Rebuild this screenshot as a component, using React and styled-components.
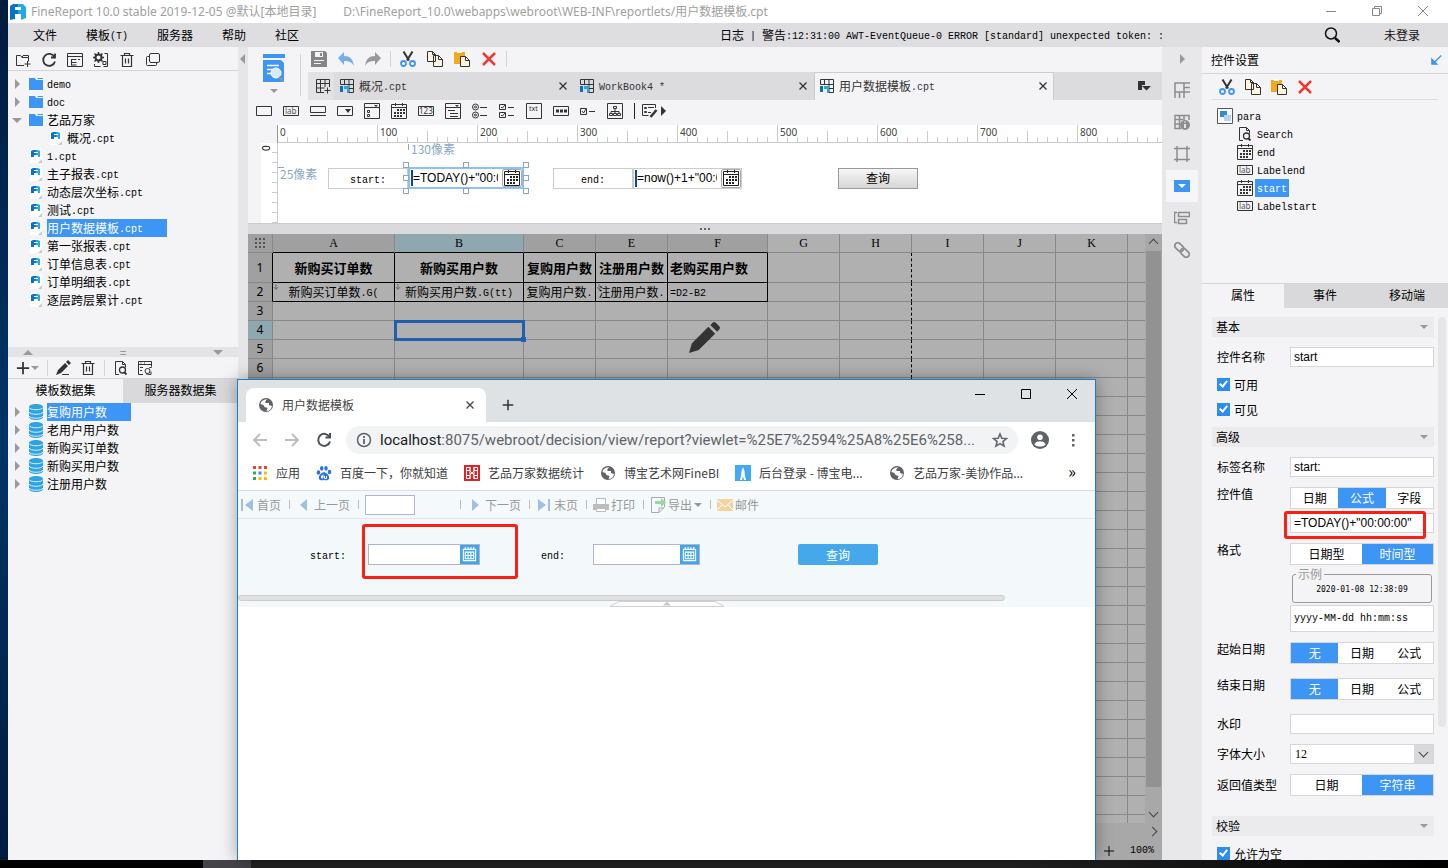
import React, { useState } from "react";
import styled, { createGlobalStyle, css } from "styled-components";

const ICONS = {
  folderAdd: <path d="M9 13.500H1.500V3.500h4l1.500 2h6.500v4M7 5.500L8 3.500h5.500v2M12.500 9v6M9.500 12h6" />,
  refresh: <path strokeWidth="1.800" d="M13.500 5A6 6 0 1 0 14 9.500M14 1.500V5.500H10" />,
  listPanel: <path d="M.5 1.500h15v13H.5zM.5 4.500h15M4.500 7v6.500M4.500 7.500h5M4.500 10.500h5M4.500 13h5M11 7.500h2" />,
  gear: <><circle cx="5.500" cy="5.500" r="3" strokeWidth="2" /><path strokeWidth="1.500" d="M5.500 0v2M5.500 9v2M0 5.500h2M9 5.500h2M1.500 1.500L3 3M8 8l1.500 1.500M9.500 1.500L8 3M1.500 9.500L3 8" /><path d="M1.500 12v2.500h6M11.500 1.500h3v13h-4M10 9.500h3v3h-3z" /></>,
  trash: <path strokeWidth="1.200" d="M1.500 3.500h13M5.500 3.500v-2h5v2M3.500 3.500v11h9v-11M6.500 6.500v5M9.500 6.500v5" />,
  duplicate: <><rect x="4.500" y="1.500" width="10" height="9" rx="1.500" /><path d="M4.500 4.500h-2a1 1 0 0 0-1 1v7a1 1 0 0 0 1 1h8a1 1 0 0 0 1-1v-2" /></>,
  save: <path fill="#858585" stroke="none" fillRule="evenodd" d="M0 0h14l2 2v14H0zM4 1v5h8V1zM9 2h2v3H9zM3 9h10v1H3zM3 12h7v1H3z" />,
  undo: <path fill="#74aff0" stroke="none" d="M6 1v4c6 0 9 3 10 10-2-4-5-5-10-5v4L0 7z" />,
  redo: <path fill="#999" stroke="none" d="M10 1v4C4 5 1 8 0 15c2-4 5-5 10-5v4l6-7z" />,
  cut: <><path strokeWidth="2" d="M3.500 0.500L9 9.500M12.500 0.500L7 9.500" /><circle cx="3.500" cy="12.500" r="2.500" stroke="#3e96ee" strokeWidth="1.800" /><circle cx="12.500" cy="12.500" r="2.500" stroke="#3e96ee" strokeWidth="1.800" /></>,
  copy: <path fill="#fdf5df" d="M.5.5h5l3 3v7h-8zM5.500.5v3h3M6.500 4.500h5l4 4v7h-9zM11.500 4.500v4h4" />,
  paste: <><path fill="#f3a81d" stroke="none" d="M0 1h11v12H0z" /><path fill="#fff" stroke="none" d="M3 0h5v2H3z" /><path fill="#fdf5df" d="M6.500 5.500h5l4 4v6h-9zM11.500 5.500v4h4" /></>,
  remove: <path stroke="#ec3b33" strokeWidth="2.500" d="M2 2l12 12M14 2L2 14" />,
  sheet: <><path d="M1.500 1.500h13v13h-5M1.500 1.500v5h13M5.500 1.500v5M10 1.500v13M10 10.500h4.500" /><path fill="#0870b8" stroke="none" d="M1 8h3v6H1z" /><path fill="#2da3e3" stroke="none" d="M5 8h5v7H8v-4H5z" /></>,
  sheetAdd: <path d="M9 14.500H1.500v-13h13V9M1.500 5.500h13M1.500 10h8M5.500 1.500v13M10 1.500V9M12.500 9.500v6M9.500 12.500h6" />,
  close: <path strokeWidth="1.300" d="M4.500 4.500l7 7M11.500 4.500l-7 7" />,
  button: <path d="M.5 3.500h15v9H.5z" />,
  label: <><path d="M.5 3.500h15v9H.5z" /><text x="2" y="11" fontSize="8" fontFamily="Noto Sans, sans-serif" fill="#555" stroke="none">lab</text></>,
  textbox: <path d="M.5 3.500h15v6H.5zM0 12.500h16" />,
  combo: <><path d="M.5 3.500h15v9H.5z" /><path fill="#333" stroke="none" d="M8 6h6l-3 4z" /></>,
  comboCheck: <><path d="M.5.5h15v15H.5zM.5 4.500h15M3.500 7.500h2v2h-2zM3.500 11.500h2v2h-2z" /><path fill="#333" stroke="none" d="M10 2h4l-2 2z" /></>,
  calendar: <><path d="M.5 1.500h15v14H.5zM.5 4.500h15M4.500 0v3M11.500 0v3" /><path strokeWidth="2" strokeDasharray="2 1" d="M6 7h8M3 10h11M3 13h8" /></>,
  calendarGrid: <path strokeWidth="1.200" d="M1.500 2.500h13v12h-13zM3.500 0v3M6.500 0v3M9.500 0v3M12.500 0v3M3.500 5.500h9v7h-9zM6.500 5.500v7M9.500 5.500v7M3.500 9h9" />,
  number: <><path d="M.5 3.500h15v9H.5z" /><text x="1" y="11" fontSize="8" fontFamily="Noto Sans, sans-serif" fill="#333" stroke="none">123</text></>,
  tree: <><path d="M.5 .5h15v15H.5zM.5 4.500h15M3 7.500h7M5 10.500h8M5 13.500h8" /><path fill="#333" stroke="none" d="M10 2h4l-2 2z" /></>,
  radios: <><circle cx="3.500" cy="4" r="3" /><circle cx="3.500" cy="4" r="1" /><circle cx="3.500" cy="12" r="3" /><circle cx="3.500" cy="12" r="1" /><path d="M8 4.500h7M8 12.500h7" /></>,
  checks: <path d="M.5 1.500h6v5h-6zM2 4l1.500 1L6 2M.5 9.500h6v5h-6zM2 12l1.500 1L6 10M9 4.500h6M9 12.500h6" />,
  txt: <><path d="M.5.5h15v15H.5z" /><text x="3" y="8" fontSize="7" fontFamily="Noto Sans, sans-serif" fill="#333" stroke="none">txt</text></>,
  password: <><path d="M.5 3.500h15v9H.5z" /><path strokeWidth="3" strokeDasharray="3 1" d="M3 8h11" /></>,
  check: <path d="M.5 5.500h6v6h-6zM2 8l1.500 2L6 6M9 8.500h6" />,
  org: <path d="M.5.5h15v15H.5zM6.500 3.500h3v2h-3zM8 6v2M4 10.500v-2h8v2M8 8v2M2.500 10.500h3v2h-3zM6.500 10.500h3v2h-3zM10.500 10.500h3v2h-3z" />,
  form: <><path d="M13.500 5V1.500H.5v11h6M2.500 4.500h2v1h-2zM2.500 8.500h2v1h-2zM6 4.500h6M6 9.500h3" /><path strokeWidth="2.500" d="M14.500 7l-6 7" /></>,
  fineMark: <><path fill="#0a72c6" stroke="none" d="M0 2l3-2h5v3H5v3h3v4H5v5l-5 1z" /><path fill="#23a9e8" stroke="none" d="M8 0h5l3 3v11l-5 2v-6H8V6h3V3H8z" /></>,
  search: <><circle cx="7" cy="6.500" r="5.500" strokeWidth="1.500" /><path strokeWidth="2.500" d="M11 11l4.500 4" /></>,
  minimize: <path d="M3 8.500h10" />,
  restore: <path d="M3.500 5.500h7v7h-7zM5.500 5.500v-2h7v7h-2" />,
  square: <path d="M3.500 3.500h9v9h-9z" />,
  winClose: <path d="M3 3l10 10M13 3L3 13" />,
  plus: <path strokeWidth="2" d="M8 1v14M1 8h14" />,
  plusThin: <path strokeWidth="1.500" d="M8 0v16M0 8h16" />,
  pencil: <path fill="#333" stroke="none" d="M0 15l2-5 7-7 3 3-7 7zM10 2l2-2 3 3-2 2zM6 14h7v1H6z" />,
  pen: <path fill="#333" stroke="none" d="M0 16l1.500-5L10 2.500 13.500 6 5 14.500zM11 1.500L12.300.3q.7-.6 1.400 0l2 2q.6.7 0 1.400L14.500 5z" />,
  docSearch: <><path d="M6 14.500H2.500v-13h7l3 3v3M9.500 1.500v3h3" /><circle cx="9.500" cy="10" r="3" strokeWidth="1.300" /><path strokeWidth="1.800" d="M11.500 12.500l2 2" /></>,
  dataEdit: <><path d="M6 14.500H1.500v-13h13v5M1.500 4.500h13M3 7.500h3M3 10.500h2M3.500 3h1M7 3h1" /><circle cx="10.500" cy="11" r="2.500" /><path d="M12 8l3-1M9 14l5 .5v-3" /></>,
  para: <><path fill="#fff" d="M.5 .5h15v15H.5z" stroke="#555" /><path fill="#2f8fcc" stroke="none" d="M3 3h7v6H3z" /><path fill="#b8d0f2" stroke="none" d="M7 7h7v6H7z" /></>,
  collapse: <path fill="#3e96ee" stroke="#3e96ee" strokeWidth="1.800" d="M15 2L6 11M2.500 7v6.500H9z" />,
  cellAttr: <path strokeWidth="1.500" d="M1 1h9v9H1zM1 10v6M5.500 10v6M10 10v6M10 1h6M10 5.500h6M10 10h6" />,
  cellInfo: <><path strokeWidth="1.500" d="M7 14.500H1v-13h14V6M1 5.500h8M5.500 1v13M10 1v5M1 10h5" /><circle cx="11" cy="11" r="5" fill="#8c8c8c" stroke="none" /><path stroke="#fff" strokeWidth="1.500" d="M11 10v4M11 7.500v1" /></>,
  frame: <path strokeWidth="1.500" d="M3 0v16M13 0v16M0 2.500h16M0 13.500h16" />,
  hyperForm: <path strokeWidth="1.500" d="M3 2.500H.5v10H3M4.500 2.500h11v4h-11zM4.500 9.500h8v4h-8z" />,
  link: <g strokeWidth="1.700" transform="rotate(45 8 8)"><rect x="-1" y="5" width="10" height="6" rx="3" /><rect x="7" y="5" width="10" height="6" rx="3" /></g>,
  back: <path strokeWidth="1.800" d="M15 8H2M8 2L2 8l6 6" />,
  forward: <path strokeWidth="1.800" d="M1 8h13M8 2l6 6-6 6" />,
  reload: <path strokeWidth="2" d="M13.500 5A6 6 0 1 0 14 9.500M14 1V5.500H9.500" />,
  info: <><circle cx="8" cy="8" r="6.500" strokeWidth="1.500" /><path strokeWidth="1.800" d="M8 7v5M8 4v2" /></>,
  star: <path strokeWidth="1.500" d="M8 2l1.800 4.200 4.700.4-3.600 3 1.200 4.600L8 11.700l-4.100 2.500 1.200-4.600-3.600-3 4.700-.4z" />,
  user: <><circle cx="8" cy="8" r="8" fill="#5f6368" stroke="none" /><circle cx="8" cy="5.500" r="2.500" fill="#fff" stroke="none" /><path fill="#fff" stroke="none" d="M3 12c1-4 9-4 10 0-2 2.500-8 2.500-10 0z" /></>,
  dots: <path fill="#5f6368" stroke="none" d="M7 2h2.500v2.500H7zM7 7h2.500v2.500H7zM7 12h2.500v2.500H7z" />,
  globe: <><circle cx="8" cy="8" r="7" fill="#5f6368" stroke="none" /><path fill="#fff" stroke="none" d="M9 2C5 3 3 4 2.500 7l3 1 1 2 3 1-1 3c3 0 5-2 5.500-5l-3-1V6H8L7 5z" /></>,
  apps: <g stroke="none"><path fill="#ea4335" d="M1 1h3v3H1zM6.500 1h3v3h-3zM12 1h3v3h-3z" /><path fill="#34a853" d="M1 6.500h3v3H1zM1 12h3v3H1z" /><path fill="#4285f4" d="M6.500 6.500h3v3h-3z" /><path fill="#fbbc05" d="M12 6.500h3v3h-3zM6.500 12h3v3h-3zM12 12h3v3h-3z" /></g>,
  paw: <g fill="#2c72ee" stroke="none"><ellipse cx="2.500" cy="7.500" rx="1.800" ry="2.300" /><ellipse cx="5.700" cy="3.300" rx="1.700" ry="2.400" /><ellipse cx="10" cy="3.300" rx="1.700" ry="2.400" /><ellipse cx="13.500" cy="7" rx="1.800" ry="2.300" /><path d="M8 7c3 1 6 4 5 7-1 2-4 1-5 1s-4 1-5-1c-1-3 2-6 5-7z" /><path stroke="#fff" fill="none" d="M7 9.500v3.500H5.500v-2H7M8.500 11v2.500h2V11" /></g>,
  redSeal: <><path fill="#d8232a" stroke="none" d="M0 0h16v16H0z" /><path stroke="#fff" d="M2.500 14V2.500H6v3H3M13.500 14V2.500H10v3h3M6 2v12M10 2v12M2.500 13.500H6v-3H3M13.500 13.500H10v-3h3M6 6l4 4M10 6l-4 4" /></>,
  blueTower: <><path fill="#43a9f4" stroke="none" d="M0 0h16v16H0z" /><path fill="#fff" stroke="none" d="M8 2l1.500 4 .5 5 1 4H9l-1-4-1 4H5l1-4 .5-5z" /></>,
  first: <path fill="#a0c0e2" stroke="none" d="M2 2h2v12H2zM14 2v12L6 8z" />,
  prev: <path fill="#a0c0e2" stroke="none" d="M11 2v12L4 8z" />,
  next: <path fill="#a0c0e2" stroke="none" d="M5 2v12l7-6z" />,
  last: <path fill="#a0c0e2" stroke="none" d="M12 2h2v12h-2zM2 2v12l8-6z" />,
  print: <><path fill="#fff" stroke="#bbb" d="M3.500 1.500h9v13h-9z" /><path fill="#bdbdbd" stroke="none" d="M0 7h16v6H0z" /><path fill="#fff" d="M3.500 11.500h9v3h-9z" stroke="#bbb" /></>,
  export: <><path stroke="#aaa" d="M9 15.500H1.500v-15h13V10L9 15.500V11h5" /><path fill="#93d9a5" stroke="none" d="M5 4h6V1l5 4.500-5 4.500V7H5z" /></>,
  mail: <><path fill="#f3d3a0" stroke="none" d="M0 2h16v12H0z" /><path stroke="#fff" d="M0 3l8 7 8-7M0 13l5-5M16 13l-5-5" /></>,
  tabList: <path fill="#333" stroke="none" d="M2 3h7v4H6v5H2zM6 8h9l-4.500 4.500z" />,
  expand: <path stroke="#555" strokeWidth="2" d="M8 0v14M2 8l6 6 6-6" />,
};

const Icon = ({ name, size = 16 }) => (
  <Svg viewBox="0 0 16 16" $size={size} aria-hidden="true">
    {ICONS[name]}
  </Svg>
);

// Latin runs are set in a half-width monospace next to full-width Chinese
const Txt = ({ children }) =>
  String(children)
    .split(/([\x20-\x7e]+)/)
    .filter(Boolean)
    .map((part, i) => (/^[\x20-\x7e]/.test(part) ? <Latin key={i}>{part}</Latin> : part));

const FolderIcon = () => (
  <FileSvg viewBox="0 0 14 14" aria-hidden="true">
    <path fill="#3d95f5" d="M0 1h6l1 2h7v10H0zM8 1h6v1H9z" />
  </FileSvg>
);

const FileIcon = () => (
  <FileSvg viewBox="0 0 14 14" aria-hidden="true">
    <path fill="#fff" d="M1 0h12v10l-4 4H1z" />
    <path fill="#ccc" d="M13 10v4H9z" />
    <path fill="#0a72c6" d="M2 2l2-1h3v2H5v1h2v2H5v2H2z" />
    <path fill="#23a9e8" d="M7 1h2l2 1v6H9V6H7V4h2V3H7z" />
  </FileSvg>
);

const DbIcon = () => (
  <DbSvg viewBox="0 0 14 16" aria-hidden="true">
    <path fill="#2da3e3" d="M0 3c0-4 14-4 14 0v10c0 4-14 4-14 0z" />
    <path fill="none" stroke="#d8effc" d="M0 3.500c1 3 13 3 14 0M0 8c1 3 13 3 14 0M0 12c1 3 13 3 14 0" />
  </DbSvg>
);

const menus = ["文件", "模板(T)", "服务器", "帮助", "社区"];

const files = [
  { name: "demo", type: "folder" },
  { name: "doc", type: "folder" },
  { name: "艺品万家", type: "folder", open: true },
  { name: "概况.cpt", child: true },
  { name: "1.cpt" },
  { name: "主子报表.cpt" },
  { name: "动态层次坐标.cpt" },
  { name: "测试.cpt" },
  { name: "用户数据模板.cpt", selected: true },
  { name: "第一张报表.cpt" },
  { name: "订单信息表.cpt" },
  { name: "订单明细表.cpt" },
  { name: "逐层跨层累计.cpt" },
];

const datasets = ["复购用户数", "老用户用户数", "新购买订单数", "新购买用户数", "注册用户数"];

const widgetIcons = ["button", "label", "textbox", "combo", "comboCheck", "calendar", "number", "tree", "radios", "checks", "txt", "password", "check", "org"];

const widgets = [
  { name: "Search", icon: "docSearch" },
  { name: "end", icon: "calendar" },
  { name: "Labelend", icon: "label" },
  { name: "start", icon: "calendar", selected: true },
  { name: "Labelstart", icon: "label" },
];

const columns = [
  { id: "A", w: 122 },
  { id: "B", w: 129 },
  { id: "C", w: 72 },
  { id: "E", w: 72 },
  { id: "F", w: 100 },
  { id: "G", w: 72 },
  { id: "H", w: 72 },
  { id: "I", w: 72 },
  { id: "J", w: 72 },
  { id: "K", w: 72 },
  { id: "", w: 72 },
];

const cells = {
  1: ["新购买订单数", "新购买用户数", "复购用户数", "注册用户数", "老购买用户数"],
  2: ["新购买订单数.G(", "新购买用户数.G(tt)", "复购用户数.", "注册用户数.", "=D2-B2"],
};

const TitleBar = () => (
  <Title>
    <Icon name="fineMark" />
    <span>FineReport 10.0 stable 2019-12-05 @默认[本地目录]</span>
    <TitlePath>D:\FineReport_10.0\webapps\webroot\WEB-INF\reportlets/用户数据模板.cpt</TitlePath>
    <WindowButtons $gap={30}>
      <IconButton aria-label="最小化"><Icon name="minimize" /></IconButton>
      <IconButton aria-label="还原"><Icon name="restore" /></IconButton>
      <IconButton aria-label="关闭"><Icon name="winClose" /></IconButton>
    </WindowButtons>
  </Title>
);

const MenuBar = () => (
  <Menu>
    <MenuItems>
      {menus.map((m) => (
        <MenuItem key={m}><Txt>{m}</Txt></MenuItem>
      ))}
    </MenuItems>
    <LogLine><Txt>{"日志 | 警告:12:31:00 AWT-EventQueue-0 ERROR [standard] unexpected token: :"}</Txt></LogLine>
    <MenuRight>
      <IconButton aria-label="搜索"><Icon name="search" /></IconButton>
      <MenuItem>未登录</MenuItem>
    </MenuRight>
  </Menu>
);

const LeftPanel = () => (
  <Left>
    <LeftTools>
      {["folderAdd", "refresh", "listPanel", "gear", "trash", "duplicate"].map((n) => (
        <IconButton key={n} aria-label={n}><Icon name={n} /></IconButton>
      ))}
    </LeftTools>
    <FileTree>
      {files.map((f) => (
        <TreeRow key={f.name} $child={f.child}>
          <Twisty>{f.type && <Caret $dir={f.open ? "down" : "right"} />}</Twisty>
          {f.type ? <FolderIcon /> : <FileIcon />}
          <TreeLabel $selected={f.selected}><Txt>{f.name}</Txt></TreeLabel>
        </TreeRow>
      ))}
    </FileTree>
    <PanelSplit>
      <Caret $dir="up" />
      <span>=</span>
      <Caret $dir="down" />
    </PanelSplit>
    <DataTools>
      <IconButton aria-label="添加"><Icon name="plus" size={14} /></IconButton>
      <Caret $dir="down" $small />
      <Divider />
      <IconButton aria-label="编辑"><Icon name="pencil" /></IconButton>
      <IconButton aria-label="删除"><Icon name="trash" /></IconButton>
      <Divider />
      <IconButton aria-label="预览"><Icon name="docSearch" /></IconButton>
      <IconButton aria-label="连接"><Icon name="dataEdit" /></IconButton>
    </DataTools>
    <Tabs>
      <PanelTab $active>模板数据集</PanelTab>
      <PanelTab>服务器数据集</PanelTab>
    </Tabs>
    <div>
      {datasets.map((d, i) => (
        <TreeRow key={d}>
          <Twisty><Caret $dir="right" /></Twisty>
          <DbIcon />
          <TreeLabel $selected={i === 0}>{d}</TreeLabel>
        </TreeRow>
      ))}
    </div>
  </Left>
);

const TemplateTab = ({ name, active }) => (
  <DocTab $active={active}>
    <Icon name="sheet" />
    <DocName><Txt>{name}</Txt></DocName>
    <IconButton aria-label="关闭标签"><Icon name="close" /></IconButton>
  </DocTab>
);

const DesignToolbar = () => (
  <DesignTop>
    <Preview aria-label="预览">
      <PreviewSvg viewBox="0 0 22 29" aria-hidden="true">
        <path fill="#3d95f5" d="M0 0h22v4H0zM0 6h18l3 3v19H0z" />
        <path stroke="#fff" strokeWidth="1.500" d="M4 11.500h12M4 15.500h8M4 19.500h6" />
        <circle cx="13" cy="19" r="5" fill="#d8ebfd" stroke="#fff" />
        <path stroke="#8a97a5" strokeWidth="2" d="M16 23l4 4" />
      </PreviewSvg>
      <Caret $dir="down" $small />
    </Preview>
    <DesignRows>
      <EditTools>
        <IconButton aria-label="保存"><Icon name="save" /></IconButton>
        <IconButton aria-label="撤销"><Icon name="undo" /></IconButton>
        <IconButton aria-label="重做"><Icon name="redo" /></IconButton>
        <Divider />
        <IconButton aria-label="剪切"><Icon name="cut" /></IconButton>
        <IconButton aria-label="复制"><Icon name="copy" /></IconButton>
        <IconButton aria-label="粘贴"><Icon name="paste" /></IconButton>
        <IconButton aria-label="删除"><Icon name="remove" /></IconButton>
        <Divider />
      </EditTools>
      <DocTabs>
        <NewTab aria-label="新建"><Icon name="sheetAdd" /></NewTab>
        <TemplateTab name="概况.cpt" />
        <TemplateTab name="WorkBook4 *" />
        <TemplateTab name="用户数据模板.cpt" active />
        <TabListButton aria-label="标签列表"><Icon name="tabList" /></TabListButton>
      </DocTabs>
    </DesignRows>
  </DesignTop>
);

const ParamDesigner = () => (
  <>
    <RulerX>
      {[0, 100, 200, 300, 400, 500, 600, 700, 800].map((n) => (
        <RulerMark key={n}>{n}</RulerMark>
      ))}
    </RulerX>
    <CanvasRow>
      <RulerY><span>0</span></RulerY>
      <Canvas>
        <OffsetTop>130像素</OffsetTop>
        <CanvasWidgets>
          <OffsetLeft>25像素</OffsetLeft>
          <LabelWidget><Txt>start:</Txt></LabelWidget>
          <DateWidget $selected>
            <DateText>=TODAY()+"00:00:00"</DateText>
            <DateIcon><Icon name="calendar" /></DateIcon>
            <HandleFrame>
              {["0 0", "50% 0", "100% 0", "0 50%", "100% 50%", "0 100%", "50% 100%", "100% 100%"].map((p) => (
                <Handle key={p} $at={p.split(" ")} />
              ))}
            </HandleFrame>
          </DateWidget>
          <LabelWidget $after={29}><Txt>end:</Txt></LabelWidget>
          <DateWidget $narrow>
            <DateText>=now()+1+"00:00:00"</DateText>
            <DateIcon><Icon name="calendar" /></DateIcon>
          </DateWidget>
          <QueryWidget>查询</QueryWidget>
        </CanvasWidgets>
      </Canvas>
    </CanvasRow>
    <CanvasSplit>
      <svg viewBox="0 0 10 2" aria-hidden="true">
        <path fill="#666" d="M0 0h2v2H0zM4 0h2v2H4zM8 0h2v2H8z" />
      </svg>
    </CanvasSplit>
  </>
);

const Sheet = () => (
  <SheetArea>
    <SheetMain>
      <SheetView>
        <Grid>
          <colgroup>
            <Col $w={25} />
            {columns.map((c, i) => <Col key={i} $w={c.w} />)}
          </colgroup>
          <thead>
            <tr>
              <Corner>
                <CornerSvg viewBox="0 0 11 11" aria-hidden="true">
                  <path fill="none" stroke="#555" strokeWidth="2" strokeDasharray="2 2" d="M0 1h11M0 5h11M0 9h11" />
                </CornerSvg>
              </Corner>
              {columns.map((c, i) => (
                <ColHead key={i} $used={i < 5} $current={c.id === "B"}>{c.id}</ColHead>
              ))}
            </tr>
          </thead>
          <tbody>
            {Array.from({ length: 31 }, (_, r) => r + 1).map((r) => (
              <tr key={r}>
                <RowHead $tall={r === 1} $used={r < 3} $current={r === 4}>{r}</RowHead>
                {columns.map((c, i) => (
                  <Cell key={i} $used={r < 3 && i < 5} $bold={r === 1} $left={i === 4 && r < 3} $page={c.id === "H"} $current={r === 4 && c.id === "B"}>
                    {cells[r] && cells[r][i] ? <Txt>{cells[r][i]}</Txt> : null}
                    {r === 2 && i < 4 && i !== 2 && <ExpandMark><Icon name="expand" size={6} /></ExpandMark>}
                  </Cell>
                ))}
              </tr>
            ))}
          </tbody>
        </Grid>
        <EditCursor><Icon name="pen" size={31} /></EditCursor>
      </SheetView>
      <ScrollY>
        <Chevron $dir="up" />
        <ScrollThumb />
        <Chevron $dir="down" />
      </ScrollY>
    </SheetMain>
    <SheetFoot>
      <ScrollX><Chevron $dir="right" /></ScrollX>
      <Zoom>
        <Icon name="plusThin" size={10} />
        <Txt>100%</Txt>
      </Zoom>
    </SheetFoot>
  </SheetArea>
);

const SegmentField = ({ items, value }) => {
  const [current, setCurrent] = useState(value);
  return (
    <Segments>
      {items.map((s) => (
        <Segment key={s} type="button" $active={s === current} onClick={() => setCurrent(s)}>{s}</Segment>
      ))}
    </Segments>
  );
};

const CheckField = ({ id, label }) => (
  <CheckRow htmlFor={id}>
    <CheckBox id={id} type="checkbox" defaultChecked />
    {label}
  </CheckRow>
);

const Section = ({ title, gap }) => (
  <SectionBar $gap={gap}>
    {title}
    <Caret $dir="down" $small />
  </SectionBar>
);

const Properties = () => (
  <PropScroll>
    <PropForm>
      <Section title="基本" />
      <Row>
        <RowLabel htmlFor="w-name">控件名称</RowLabel>
        <Field id="w-name" defaultValue="start" />
      </Row>
      <CheckGroup>
        <CheckField id="w-enabled" label="可用" />
        <CheckField id="w-visible" label="可见" />
      </CheckGroup>
      <Section title="高级" gap={5} />
      <Row>
        <RowLabel htmlFor="w-label">标签名称</RowLabel>
        <Field id="w-label" defaultValue="start:" />
      </Row>
      <Row $top>
        <RowLabel htmlFor="w-value">控件值</RowLabel>
        <Stack $gap={4}>
          <SegmentField items={["日期", "公式", "字段"]} value="公式" />
          <Marked>
            <Field id="w-value" defaultValue={'=TODAY()+"00:00:00"'} />
            <FormulaMark />
          </Marked>
        </Stack>
      </Row>
      <Row $top>
        <RowLabel as="span">格式</RowLabel>
        <Stack $gap={2}>
          <SegmentField items={["日期型", "时间型"]} value="时间型" />
          <Sample>
            <legend>示例</legend>
            2020-01-08 12:38:09
          </Sample>
          <Field $mono aria-label="格式" defaultValue="yyyy-MM-dd hh:mm:ss" />
        </Stack>
      </Row>
      <Row $top>
        <RowLabel as="span">起始日期</RowLabel>
        <SegmentField items={["无", "日期", "公式"]} value="无" />
      </Row>
      <Row $top $gap={14}>
        <RowLabel as="span">结束日期</RowLabel>
        <SegmentField items={["无", "日期", "公式"]} value="无" />
      </Row>
      <Row $gap={14}>
        <RowLabel htmlFor="w-mark">水印</RowLabel>
        <Field id="w-mark" />
      </Row>
      <Row>
        <RowLabel htmlFor="w-size">字体大小</RowLabel>
        <SelectWrap>
          <SizeSelect id="w-size" defaultValue="12">
            <option>12</option>
            <option>14</option>
          </SizeSelect>
          <SelectArrow><Chevron $dir="down" /></SelectArrow>
        </SelectWrap>
      </Row>
      <Row>
        <RowLabel as="span">返回值类型</RowLabel>
        <SegmentField items={["日期", "字符串"]} value="字符串" />
      </Row>
      <Section title="校验" gap={20} />
      <CheckGroup>
        <CheckField id="w-empty" label="允许为空" />
      </CheckGroup>
    </PropForm>
    <PropBar />
  </PropScroll>
);

const RightPanel = () => (
  <Right>
    <RightHead>
      控件设置
      <IconButton aria-label="收起"><Icon name="collapse" size={12} /></IconButton>
    </RightHead>
    <RightTools>
      {["cut", "copy", "paste", "remove"].map((n) => (
        <IconButton key={n} aria-label={n}><Icon name={n} /></IconButton>
      ))}
    </RightTools>
    <WidgetTree>
      <WidgetRow>
        <Icon name="para" />
        <WidgetName><Txt>para</Txt></WidgetName>
      </WidgetRow>
      {widgets.map((w) => (
        <WidgetRow key={w.name} $child>
          <Icon name={w.icon} />
          <WidgetName $selected={w.selected}><Txt>{w.name}</Txt></WidgetName>
        </WidgetRow>
      ))}
    </WidgetTree>
    <Tabs>
      <PanelTab $active>属性</PanelTab>
      <PanelTab>事件</PanelTab>
      <PanelTab>移动端</PanelTab>
    </Tabs>
    <Properties />
  </Right>
);

const Browser = () => (
  <BrowserWindow>
    <TabStrip>
      <BrowserTab>
        <Icon name="globe" />
        <span>用户数据模板</span>
        <IconButton aria-label="关闭标签页"><Icon name="close" /></IconButton>
      </BrowserTab>
      <NewBrowserTab aria-label="新标签页"><Icon name="plus" size={12} /></NewBrowserTab>
      <WindowButtons $gap={30} $dark>
        <IconButton aria-label="最小化窗口"><Icon name="minimize" /></IconButton>
        <IconButton aria-label="最大化窗口"><Icon name="square" /></IconButton>
        <IconButton aria-label="关闭窗口"><Icon name="winClose" /></IconButton>
      </WindowButtons>
    </TabStrip>
    <AddressRow>
      <NavButton aria-label="后退"><Icon name="back" /></NavButton>
      <NavButton aria-label="前进"><Icon name="forward" /></NavButton>
      <NavButton aria-label="刷新" $on><Icon name="reload" /></NavButton>
      <Address>
        <Icon name="info" />
        <Url><b>localhost</b>:8075/webroot/decision/view/report?viewlet=%25E7%2594%25A8%25E6%258...</Url>
        <Icon name="star" />
      </Address>
      <NavButton aria-label="账户" $on><Icon name="user" size={18} /></NavButton>
      <NavButton aria-label="更多" $on><Icon name="dots" /></NavButton>
    </AddressRow>
    <Bookmarks>
      <Bookmark href="#apps" $w={64}><Icon name="apps" />应用</Bookmark>
      <Bookmark href="#baidu" $w={148}><Icon name="paw" />百度一下，你就知道</Bookmark>
      <Bookmark href="#stats" $w={136}><Icon name="redSeal" />艺品万家数据统计</Bookmark>
      <Bookmark href="#bi" $w={135}><Icon name="globe" />博宝艺术网FineBI</Bookmark>
      <Bookmark href="#login" $w={154}><Icon name="blueTower" />后台登录 - 博宝电...</Bookmark>
      <Bookmark href="#works" $w={150}><Icon name="globe" />艺品万家-美协作品...</Bookmark>
      <MoreMarks aria-label="更多书签">»</MoreMarks>
    </Bookmarks>
    <ReportBar>
      <ReportButton><Icon name="first" />首页</ReportButton>
      <Bar />
      <ReportButton><Icon name="prev" />上一页</ReportButton>
      <Bar />
      <PageInput aria-label="页码" />
      <Bar />
      <ReportButton><Icon name="next" />下一页</ReportButton>
      <Bar />
      <ReportButton><Icon name="last" />末页</ReportButton>
      <Bar />
      <ReportButton><Icon name="print" />打印</ReportButton>
      <Bar />
      <ReportButton><Icon name="export" />导出<Caret $dir="down" $small /></ReportButton>
      <Bar />
      <ReportButton><Icon name="mail" />邮件</ReportButton>
    </ReportBar>
    <ParamPane>
      <ParamRow>
        <ParamLabel htmlFor="p-start"><Txt>start:</Txt></ParamLabel>
        <DateInput>
          <input id="p-start" />
          <DateButton aria-label="选择开始日期"><Icon name="calendarGrid" size={15} /></DateButton>
          <StartMark />
        </DateInput>
        <ParamLabel htmlFor="p-end" $before={61}><Txt>end:</Txt></ParamLabel>
        <DateInput $narrow>
          <input id="p-end" />
          <DateButton aria-label="选择结束日期"><Icon name="calendarGrid" size={15} /></DateButton>
        </DateInput>
        <Query>查询</Query>
      </ParamRow>
      <PaneScroll />
      <PaneFold>
        <svg viewBox="0 0 114 6" aria-hidden="true">
          <path fill="#fff" stroke="#d0d0d0" d="M0 5.500L9 .5h96l9 5z" />
          <path fill="#c8c8c8" d="M53 4.500l4-4 4 4z" />
        </svg>
      </PaneFold>
    </ParamPane>
  </BrowserWindow>
);

export default function App() {
  return (
    <Desktop>
      <GlobalStyle />
      <Designer>
        <TitleBar />
        <MenuBar />
        <Body>
          <LeftPanel />
          <Gutter><Caret $dir="left" /></Gutter>
          <Center>
            <DesignToolbar />
            <WidgetBar>
              {widgetIcons.map((n) => (
                <IconButton key={n} aria-label={n}><Icon name={n} /></IconButton>
              ))}
              <Divider $dark />
              <FormButton aria-label="预定义控件"><Icon name="form" /><Caret $dir="right" $dark /></FormButton>
            </WidgetBar>
            <ParamDesigner />
            <Sheet />
          </Center>
          <Rail>
            <Caret $dir="right" />
            {["cellAttr", "cellInfo", "frame", "widget", "hyperForm", "link"].map((n) => (
              <RailButton key={n} aria-label={n} $active={n === "widget"}>
                {n === "widget" ? <WidgetChip><Caret $dir="down" $light $small /></WidgetChip> : <Icon name={n} />}
              </RailButton>
            ))}
          </Rail>
          <RightPanel />
        </Body>
      </Designer>
      <Browser />
      <Taskbar><TaskActive /></Taskbar>
    </Desktop>
  );
}

const GlobalStyle = createGlobalStyle`
  *, *::before, *::after {
    box-sizing: border-box;
  }
  body {
    margin: 0;
    overflow: hidden;
    font: 12px/18px "Noto Sans CJK SC", sans-serif;
    color: #000;
  }
  button, input, select {
    font: inherit;
    color: inherit;
    border: 0;
    padding: 0;
    margin: 0;
    background: none;
    border-radius: 0;
  }
`;

const Svg = styled.svg`
  flex: none;
  display: block;
  width: ${(p) => p.$size}px;
  height: ${(p) => p.$size}px;
  fill: none;
  stroke: currentColor;
`;

const Latin = styled.span`
  font-family: "Liberation Mono", monospace;
  font-size: 10px;
  line-height: 10px;
  vertical-align: 1px;
  white-space: pre;
`;

const FileSvg = styled.svg`
  flex: none;
  width: 14px;
  height: 14px;
`;

const DbSvg = styled.svg`
  flex: none;
  width: 14px;
  height: 16px;
`;

const caretBorders = {
  up: "0 5px 5px 5px",
  down: "5px 5px 0 5px",
  right: "5px 0 5px 5px",
  left: "5px 5px 5px 0",
};

const caretSides = { up: "bottom", down: "top", right: "left", left: "right" };

const Caret = styled.i`
  flex: none;
  width: 0;
  height: 0;
  border: solid transparent;
  border-width: ${(p) => caretBorders[p.$dir]};
  border-${(p) => caretSides[p.$dir]}-color: ${(p) => (p.$light ? "#fff" : p.$dark ? "#333" : "#999")};
  ${(p) => p.$small && "border-width: 4px 4px 0 4px;"}
`;

const turns = { up: "-135deg", right: "-45deg", down: "45deg" };

const Chevron = styled.i`
  flex: none;
  width: 7px;
  height: 7px;
  border: solid #444;
  border-width: 0 1px 1px 0;
  transform: rotate(${(p) => turns[p.$dir]});
`;

const IconButton = styled.button`
  display: flex;
  align-items: center;
  justify-content: center;
  flex: none;
`;

const Divider = styled.i`
  flex: none;
  width: 1px;
  height: 16px;
  background: ${(p) => (p.$dark ? "#222" : "#d4d4d6")};
`;

const Desktop = styled.div`
  position: relative;
  display: flex;
  flex-direction: column;
  height: 100vh;
  background: linear-gradient(#001b3d, #003468 50%, #001b3d);
`;

const Designer = styled.div`
  flex: 1;
  min-height: 0;
  display: flex;
  flex-direction: column;
  margin-left: 8px;
  background: #f4f4f6;
`;

const Title = styled.header`
  display: flex;
  align-items: center;
  height: 23px;
  padding: 0 17px 0 2px;
  gap: 5px;
  background: #fff;
  color: #a0a0a0;
  font-family: "Noto Sans", "Noto Sans CJK SC", sans-serif;
  white-space: nowrap;
`;

const TitlePath = styled.span`
  margin-left: 22px;
`;

const WindowButtons = styled.div`
  display: flex;
  gap: ${(p) => p.$gap}px;
  margin-left: auto;
  padding-bottom: 2px;
  color: ${(p) => (p.$dark ? "#000" : "#888")};
`;

const Menu = styled.nav`
  display: flex;
  align-items: center;
  height: 24px;
  padding-bottom: 1px;
  background: #dedee0;
`;

const MenuItems = styled.div`
  flex: 1;
  display: flex;
  gap: 29px;
  padding-left: 25px;
`;

const MenuItem = styled.button`
  white-space: nowrap;
`;

const LogLine = styled.div`
  width: 442px;
  overflow: hidden;
  white-space: nowrap;
`;

const MenuRight = styled.div`
  display: flex;
  align-items: center;
  justify-content: flex-end;
  gap: 44px;
  width: 286px;
  padding-right: 28px;
  color: #111;
`;

const Body = styled.div`
  flex: 1;
  min-height: 0;
  display: flex;
`;

const Left = styled.aside`
  flex: none;
  width: 230px;
  display: flex;
  flex-direction: column;
`;

const LeftTools = styled.div`
  display: flex;
  align-items: center;
  gap: 10px;
  height: 24px;
  padding: 2px 7px 0;
  border-bottom: 1px solid #d4d4d6;
  color: #333;
`;

const FileTree = styled.div`
  height: 276px;
  padding-top: 4px;
`;

const TreeRow = styled.div`
  display: flex;
  align-items: center;
  height: 18px;
  gap: 4px;
  padding-left: ${(p) => (p.$child ? 24 : 4)}px;
  white-space: nowrap;
`;

const Twisty = styled.span`
  display: flex;
  justify-content: center;
  width: 13px;
  padding-right: 3px;
`;

const TreeLabel = styled.span`
  ${(p) =>
    p.$selected &&
    css`
      padding-right: 24px;
      background: #3d95f5;
      color: #fff;
    `}
`;

const PanelSplit = styled.div`
  display: flex;
  align-items: center;
  justify-content: space-between;
  height: 10px;
  padding: 0 15px;
  background: #e4e4e6;
  color: #888;
  line-height: 10px;
`;

const DataTools = styled.div`
  display: flex;
  align-items: center;
  gap: 8px;
  height: 21px;
  padding: 0 8px;
  color: #333;
  & > i:nth-child(2) {
    margin-left: -7px;
  }
`;

const Tabs = styled.div`
  display: flex;
  height: 25px;
`;

const PanelTab = styled.button`
  flex: 1;
  padding-bottom: 2px;
  background: ${(p) => (p.$active ? "transparent" : "#d9d9db")};
  border-top: 1px solid #d4d4d6;
`;

const Gutter = styled.div`
  flex: none;
  width: 10px;
  padding: 7px 0 0 2px;
  display: flex;
  background: #e6e6e8;
`;

const Center = styled.main`
  flex: 1;
  min-width: 0;
  display: flex;
  flex-direction: column;
`;

const DesignTop = styled.div`
  display: flex;
  height: 53px;
`;

const Preview = styled.button`
  flex: none;
  width: 53px;
  height: 42px;
  margin: 7px 7px 0 0;
  display: flex;
  flex-direction: column;
  align-items: center;
  gap: 6px;
  border-right: 1px solid #d4d4d6;
`;

const PreviewSvg = styled.svg`
  width: 22px;
  height: 29px;
  fill: none;
`;

const DesignRows = styled.div`
  flex: 1;
  min-width: 0;
`;

const EditTools = styled.div`
  display: flex;
  align-items: center;
  gap: 11px;
  height: 25px;
  padding: 0 3px 1px;
  color: #333;
  & > i {
    margin: 0 -2px;
  }
`;

const DocTabs = styled.div`
  display: flex;
  height: 28px;
  background: #dcdcde;
  color: #333;
`;

const NewTab = styled.button`
  flex: none;
  width: 26px;
  display: flex;
  align-items: center;
  justify-content: flex-end;
  padding-right: 3px;
  background: #e2e2e4;
`;

const DocTab = styled.div`
  flex: 0 1 240px;
  display: flex;
  align-items: center;
  gap: 4px;
  padding: 0 2px 2px 4px;
  white-space: nowrap;
  background: ${(p) => (p.$active ? "#f4f4f6" : "transparent")};
  border: solid ${(p) => (p.$active ? "#cdcdcf" : "transparent")};
  border-width: 1px 1px 0;
`;

const DocName = styled.span`
  flex: 1;
`;

const TabListButton = styled(IconButton)`
  margin-left: auto;
  padding-right: 10px;
`;

const WidgetBar = styled.div`
  display: flex;
  align-items: center;
  gap: 11px;
  height: 25px;
  padding: 0 8px 3px;
  color: #333;
`;

const FormButton = styled(IconButton)`
  gap: 3px;
  margin-left: -4px;
`;

const RulerX = styled.div`
  display: flex;
  height: 18px;
  margin-left: 29px;
  overflow: hidden;
  border-left: 1px solid #999;
  border-bottom: 1px solid #c8c8ca;
  background: #fff;
`;

const RulerMark = styled.span`
  flex: none;
  width: 100px;
  padding-left: 2px;
  border-right: 1px solid #ccc;
  background:
    linear-gradient(#ccc, #ccc) 49px 100% / 1px 11px no-repeat,
    repeating-linear-gradient(90deg, transparent 0 9px, #ccc 9px 10px) 0 100% / 100px 5px no-repeat;
  font: 10px/14px "Noto Sans", sans-serif;
  color: #444;
`;

const CanvasRow = styled.div`
  display: flex;
  height: 80px;
  padding-left: 13px;
`;

const RulerY = styled.div`
  flex: none;
  width: 17px;
  padding-left: 1px;
  border-right: 1px solid #ccc;
  background: repeating-linear-gradient(transparent 0 9px, #ccc 9px 10px) 100% 0 / 5px 100% no-repeat #fff;
  font: 10px/8px "Noto Sans", sans-serif;
  & > span {
    display: block;
    width: 8px;
    transform: rotate(-90deg);
  }
`;

const Canvas = styled.div`
  flex: 1;
  min-width: 0;
  background: #fff;
`;

const OffsetTop = styled.div`
  width: 60px;
  height: 16px;
  margin-left: 130px;
  padding-left: 3px;
  line-height: 12px;
  color: #8aa8c4;
  background: linear-gradient(#8aa8c4, #8aa8c4) 0 1px / 1px 6px no-repeat;
`;

const CanvasWidgets = styled.div`
  display: flex;
  align-items: center;
  padding-top: 8px;
  height: 22px;
  box-sizing: content-box;
`;

const OffsetLeft = styled.span`
  flex: none;
  align-self: flex-start;
  width: 50px;
  padding-left: 2px;
  line-height: 14px;
  color: #8aa8c4;
  background: linear-gradient(#8aa8c4, #8aa8c4) 0 0 / 6px 1px no-repeat;
`;

const LabelWidget = styled.span`
  flex: none;
  width: 80px;
  height: 21px;
  margin-left: ${(p) => p.$after || 0}px;
  line-height: 20px;
  text-align: center;
  border: 1px solid #ccc;
`;

const DateWidget = styled.div`
  position: relative;
  flex: none;
  display: flex;
  width: ${(p) => (p.$narrow ? 109 : 116)}px;
  height: ${(p) => (p.$selected ? 22 : 21)}px;
  border: ${(p) => (p.$selected ? "2px solid #8ec0f4" : "1px solid #ccc")};
`;

const DateText = styled.span`
  flex: 1;
  min-width: 0;
  overflow: hidden;
  margin: 1px 4px 1px 1px;
  border-left: 2px solid #0b4a8a;
  font: 12px/16px "Liberation Sans", Arial, sans-serif;
  white-space: nowrap;
`;

const DateIcon = styled.span`
  display: flex;
  align-items: center;
  justify-content: center;
  flex: none;
  width: 20px;
  border: 1px solid #aaa;
  border-radius: 2px;
  color: #222;
`;

const HandleFrame = styled.div`
  position: absolute;
  inset: -4px;
`;

const Handle = styled.i`
  position: absolute;
  left: ${(p) => p.$at[0]};
  top: ${(p) => p.$at[1]};
  width: 6px;
  height: 6px;
  margin: -3px;
  border: 1px solid #8aa8c4;
  background: #fff;
`;

const QueryWidget = styled.span`
  flex: none;
  width: 80px;
  height: 21px;
  margin-left: 96px;
  text-align: center;
  border: 1px solid #999;
  background: linear-gradient(#f6f6f6, #d6d6d6);
`;

const CanvasSplit = styled.div`
  display: flex;
  align-items: center;
  justify-content: center;
  height: 11px;
  border-top: 1px solid #ccc;
  background: #dadadc;
  & > svg {
    width: 10px;
    height: 2px;
  }
`;

const SheetArea = styled.div`
  flex: 1;
  min-height: 0;
  display: flex;
  flex-direction: column;
  background: #b0b0b0;
`;

const SheetMain = styled.div`
  flex: 1;
  min-height: 0;
  display: flex;
`;

const SheetView = styled.div`
  position: relative;
  flex: 1;
  min-width: 0;
  overflow: hidden;
`;

const Grid = styled.table`
  width: 922px;
  table-layout: fixed;
  border-collapse: separate;
  border-spacing: 0;
`;

const Col = styled.col`
  width: ${(p) => p.$w}px;
`;

const ColHead = styled.th`
  height: 19px;
  padding: 0;
  border: solid #888;
  border-width: 0 1px 1px 0;
  border-bottom-color: ${(p) => (p.$used ? "#000" : "#888")};
  background: ${(p) => (p.$current ? "#8fa7ae" : p.$used ? "#a0a0a0" : "#b0b0b0")};
  font: 12px/16px "Liberation Serif", serif;
`;

const Corner = styled(ColHead)`
  background: #a0a0a0;
`;

const CornerSvg = styled.svg`
  display: block;
  width: 11px;
  height: 11px;
  margin: 0 auto;
`;

const RowHead = styled(ColHead)`
  height: ${(p) => (p.$tall ? 30 : 19)}px;
  border-bottom-color: #888;
  border-right-color: ${(p) => (p.$used ? "#000" : "#888")};
  background: ${(p) => (p.$current ? "#8fa7ae" : "#a0a0a0")};
  font: 12px/16px "Noto Sans", sans-serif;
`;

const Cell = styled.td`
  position: relative;
  height: 19px;
  padding: 0 0 0 ${(p) => (p.$left ? 2 : 0)}px;
  overflow: hidden;
  white-space: nowrap;
  line-height: 16px;
  text-align: ${(p) => (p.$left ? "left" : "center")};
  font-weight: ${(p) => (p.$bold ? 700 : 400)};
  font-size: ${(p) => (p.$bold ? 13 : 12)}px;
  border: solid ${(p) => (p.$used ? "#000" : "#888")};
  border-width: 0 1px 1px 0;
  ${(p) => p.$page && "border-right: 1px dashed #000;"}
  ${(p) =>
    p.$current &&
    css`
      overflow: visible;
      outline: 3px solid #1f5fae;
      outline-offset: -2px;
      z-index: 1;
      &::after {
        content: "";
        position: absolute;
        right: -3px;
        bottom: -3px;
        width: 5px;
        height: 5px;
        background: #1f5fae;
      }
    `}
`;

const ExpandMark = styled.i`
  position: absolute;
  left: 0;
  top: 1px;
`;

const EditCursor = styled.span`
  position: absolute;
  left: 441px;
  top: 88px;
`;

const ScrollY = styled.div`
  flex: none;
  width: 17px;
  display: flex;
  flex-direction: column;
  align-items: center;
  padding: 6px 0 7px;
  gap: 4px;
  background: #a8a8a8;
`;

const ScrollThumb = styled.div`
  width: 15px;
  flex: 0 1 536px;
  margin-bottom: auto;
  background: #929292;
`;

const SheetFoot = styled.div`
  height: 37px;
  background: #a8a8a8;
`;

const ScrollX = styled.div`
  display: flex;
  align-items: center;
  justify-content: flex-end;
  height: 17px;
  padding-right: 6px;
`;

const Zoom = styled.div`
  display: flex;
  align-items: center;
  justify-content: flex-end;
  gap: 16px;
  padding: 2px 8px 0 0;
  height: 20px;
`;

const Rail = styled.div`
  flex: none;
  width: 40px;
  display: flex;
  flex-direction: column;
  align-items: center;
  padding-top: 7px;
  background: #e8e8ea;
  color: #8c8c8c;
  & > i {
    margin-bottom: 10px;
  }
`;

const RailButton = styled(IconButton)`
  width: 32px;
  height: 32px;
  background: ${(p) => (p.$active ? "#f6f6f8" : "transparent")};
`;

const WidgetChip = styled.span`
  display: flex;
  align-items: center;
  justify-content: center;
  width: 16px;
  height: 12px;
  background: #3d95f5;
`;

const Right = styled.aside`
  flex: none;
  width: 246px;
  display: flex;
  flex-direction: column;
`;

const RightHead = styled.div`
  display: flex;
  align-items: center;
  justify-content: space-between;
  height: 27px;
  padding: 0 6px 0 9px;
  border-bottom: 1px solid #d4d4d6;
`;

const RightTools = styled.div`
  display: flex;
  align-items: center;
  gap: 10px;
  height: 26px;
  margin: 0 10px;
  padding: 1px 7px 0;
  border-bottom: 1px solid #dcdcde;
  color: #333;
`;

const WidgetTree = styled.div`
  height: 183px;
  padding: 7px 0 0 15px;
  color: #333;
`;

const WidgetRow = styled.div`
  display: flex;
  align-items: center;
  gap: 2px;
  height: 18px;
  padding-left: ${(p) => (p.$child ? 20 : 0)}px;
`;

const WidgetName = styled.span`
  padding: 0 2px;
  color: ${(p) => (p.$selected ? "#fff" : "#000")};
  background: ${(p) => (p.$selected ? "#3d95f5" : "transparent")};
`;

const PropScroll = styled.div`
  flex: 1;
  min-height: 0;
  display: flex;
  gap: 4px;
  padding: 9px 2px 0 10px;
  overflow: hidden;
`;

const PropForm = styled.form`
  flex: 1;
  min-width: 0;
`;

const PropBar = styled.div`
  flex: none;
  width: 8px;
  height: 410px;
  border-radius: 4px;
  background: #e6e6e8;
`;

const SectionBar = styled.div`
  display: flex;
  align-items: center;
  justify-content: space-between;
  height: 20px;
  margin-top: ${(p) => p.$gap || 0}px;
  padding: 0 6px 0 4px;
  background: #ebebed;
`;

const Row = styled.div`
  display: flex;
  align-items: ${(p) => (p.$top ? "flex-start" : "center")};
  margin-top: ${(p) => p.$gap || 10}px;
  padding-left: 5px;
`;

const RowLabel = styled.label`
  flex: none;
  width: 73px;
  line-height: 14px;
  white-space: nowrap;
`;

const Stack = styled.div`
  flex: 1;
  min-width: 0;
  display: flex;
  flex-direction: column;
  gap: ${(p) => p.$gap}px;
`;

const Field = styled.input`
  flex: 1;
  min-width: 0;
  width: 100%;
  height: 20px;
  padding: 0 3px;
  border: 1px solid #d6d6d8;
  background: #fff;
  font: 12px/18px "Liberation Sans", Arial, sans-serif;
  ${(p) =>
    p.$mono &&
    css`
      flex: none;
      height: 27px;
      font: 10px/25px "Liberation Mono", monospace;
    `}
`;

const Marked = styled.div`
  position: relative;
  display: flex;
`;

const FormulaMark = styled.i`
  position: absolute;
  inset: -2px 8px -6px -6px;
  border: 3px solid #fb2013;
  border-radius: 3px;
`;

const CheckGroup = styled.div`
  padding: 5px 0 0 5px;
`;

const CheckRow = styled.label`
  display: flex;
  align-items: center;
  gap: 4px;
  height: 25px;
`;

const CheckBox = styled.input`
  appearance: none;
  position: relative;
  flex: none;
  width: 13px;
  height: 13px;
  border: 1px solid #2d8cf0;
  background: #fff;
  &:checked {
    background: #2d8cf0;
  }
  &:checked::after {
    content: "";
    position: absolute;
    left: 3px;
    top: 0;
    width: 5px;
    height: 8px;
    border: solid #fff;
    border-width: 0 2px 2px 0;
    transform: rotate(40deg);
  }
`;

const Segments = styled.div`
  flex: 1;
  display: flex;
  min-height: 22px;
  border: 1px solid #d6d6d8;
  background: #fff;
`;

const Segment = styled.button`
  flex: 1;
  height: 20px;
  line-height: 20px;
  color: ${(p) => (p.$active ? "#fff" : "#000")};
  background: ${(p) => (p.$active ? "#3d95f5" : "transparent")};
`;

const Sample = styled.fieldset`
  height: 36px;
  margin: 0 2px;
  padding: 0;
  border: 1px solid #999;
  border-radius: 3px;
  text-align: center;
  font: 8px/18px "DejaVu Sans Mono", monospace;
  & > legend {
    margin-left: 3px;
    padding: 0 2px;
    text-align: left;
    font: 12px/14px "Noto Sans CJK SC", sans-serif;
    color: #999;
  }
`;

const SelectWrap = styled.div`
  flex: 1;
  display: flex;
  height: 20px;
  border: 1px solid #d6d6d8;
  background: #fff;
`;

const SizeSelect = styled.select`
  flex: 1;
  appearance: none;
  padding: 0 4px;
  font: 12px/16px "Liberation Serif", serif;
`;

const SelectArrow = styled.span`
  display: flex;
  align-items: center;
  justify-content: center;
  width: 19px;
  padding-bottom: 4px;
  background: #d9d9db;
  pointer-events: none;
`;

const BrowserWindow = styled.section`
  position: absolute;
  left: 237px;
  right: 352px;
  top: 379px;
  bottom: 8px;
  z-index: 2;
  display: flex;
  flex-direction: column;
  border: 1px solid #1d7cc4;
  border-bottom: 0;
  background: #fff;
  box-shadow: 0 0 16px rgba(0, 0, 0, 0.35);
`;

const TabStrip = styled.div`
  display: flex;
  height: 42px;
  padding: 8px 15px 0 8px;
  background: #dee2e5;
  & > div:last-child {
    align-self: flex-start;
    margin-top: -2px;
  }
`;

const BrowserTab = styled.div`
  display: flex;
  align-items: center;
  gap: 8px;
  width: 240px;
  padding: 0 8px 0 12px;
  border-radius: 8px 8px 0 0;
  background: #fff;
  color: #444;
  & > span {
    flex: 1;
  }
`;

const NewBrowserTab = styled(IconButton)`
  width: 44px;
  color: #333;
`;

const AddressRow = styled.div`
  display: flex;
  align-items: center;
  gap: 16px;
  height: 36px;
  padding: 0 14px;
`;

const NavButton = styled(IconButton)`
  color: ${(p) => (p.$on ? "#4d5156" : "#bbb")};
`;

const Address = styled.div`
  flex: 1;
  min-width: 0;
  display: flex;
  align-items: center;
  gap: 8px;
  height: 28px;
  margin: 0 -3px 0 -2px;
  padding: 0 10px;
  border-radius: 14px;
  background: #f1f3f4;
  color: #5f6368;
`;

const Url = styled.span`
  flex: 1;
  min-width: 0;
  overflow: hidden;
  white-space: nowrap;
  font: 15px/28px Roboto, sans-serif;
  & > b {
    font-weight: 400;
    color: #202124;
  }
`;

const Bookmarks = styled.nav`
  display: flex;
  align-items: center;
  height: 33px;
  padding: 0 14px 2px;
  border-bottom: 1px solid #dadce0;
`;

const Bookmark = styled.a`
  flex: 0 1 auto;
  width: ${(p) => p.$w}px;
  display: flex;
  align-items: center;
  gap: 8px;
  overflow: hidden;
  white-space: nowrap;
  color: #3c4043;
  text-decoration: none;
`;

const MoreMarks = styled.button`
  margin-left: auto;
  padding: 0 5px 4px 0;
  font-size: 16px;
`;

const ReportBar = styled.div`
  display: flex;
  align-items: center;
  gap: 8px;
  height: 28px;
  padding: 0 1px;
  border-bottom: 1px solid #e6e6e8;
  background: #f4f9fb;
  color: #999;
`;

const ReportButton = styled.button`
  display: flex;
  align-items: center;
  gap: 2px;
  white-space: nowrap;
`;

const Bar = styled.i`
  width: 1px;
  height: 9px;
  margin-right: -2px;
  background: #bbb;
`;

const PageInput = styled.input`
  width: 50px;
  height: 20px;
  margin-right: 37px;
  border: 1px solid #b0b4cc;
  background: #fff;
`;

const ParamPane = styled.div`
  background: #f3f9fb;
`;

const ParamRow = styled.div`
  display: flex;
  align-items: center;
  height: 76px;
  padding: 0 0 5px 72px;
`;

const ParamLabel = styled.label`
  width: ${(p) => (p.$before ? 52 : 58)}px;
  margin-left: ${(p) => p.$before || 0}px;
`;

const DateInput = styled.div`
  position: relative;
  display: flex;
  width: ${(p) => (p.$narrow ? 107 : 112)}px;
  height: 21px;
  border: 1px solid #b0b4cc;
  background: #fff;
  & > input {
    flex: 1;
    min-width: 0;
  }
`;

const DateButton = styled(IconButton)`
  width: 19px;
  background: #40a5ea;
  color: #fff;
`;

const StartMark = styled.i`
  position: absolute;
  inset: -21px -39px -15px -7px;
  border: 3px solid #fb2013;
  border-radius: 3px;
`;

const Query = styled.button`
  width: 80px;
  height: 21px;
  margin-left: 98px;
  border-radius: 2px;
  background: #45a8ea;
  color: #fff;
`;

const PaneScroll = styled.div`
  width: 767px;
  max-width: 90%;
  height: 6px;
  border: 1px solid #ccc;
  border-radius: 3px;
  background: #e2e2e2;
`;

const PaneFold = styled.div`
  display: flex;
  justify-content: center;
  height: 6px;
  & > svg {
    width: 114px;
    height: 6px;
  }
`;

const Taskbar = styled.footer`
  flex: none;
  display: flex;
  height: 8px;
  background: linear-gradient(90deg, #000 203px, #222 203px 70%, #000);
`;

const TaskActive = styled.div`
  width: 48px;
  margin-left: 203px;
  background: #444448;
`;
